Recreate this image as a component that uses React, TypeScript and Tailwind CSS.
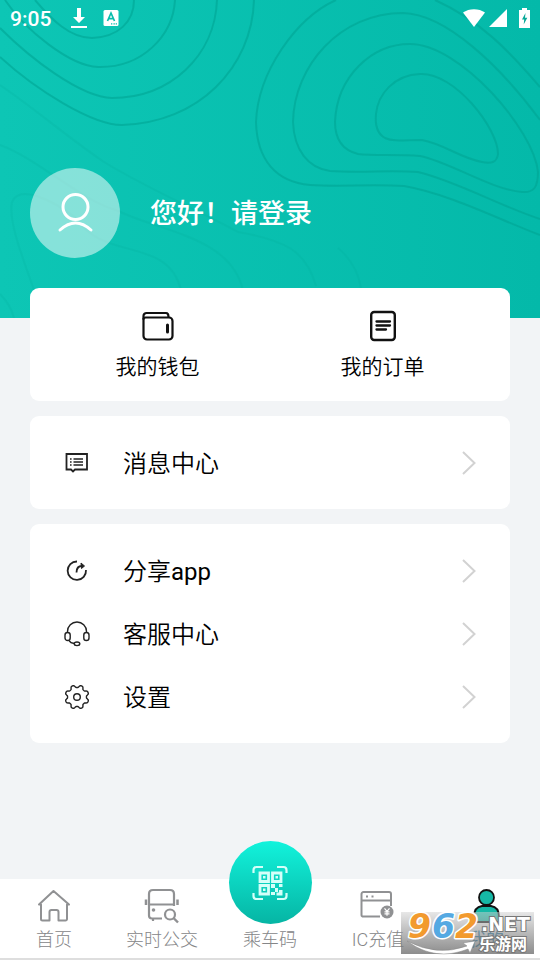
import type { ReactNode } from 'react';

function Contours() {
  return (
    <svg
      className="absolute inset-0 h-full w-full"
      viewBox="0 0 540 318"
      preserveAspectRatio="xMidYMid slice"
      fill="none"
      aria-hidden="true"
    >
      <g stroke="#00a595" strokeOpacity="0.6" strokeWidth="2">
        <path d="M35 0C52 20 70 38 92 38C118 37 134 22 134 0" />
        <path d="M5 0C25 30 70 66 98 67C142 68 173 36 175 0" />
        <path d="M0 28C30 58 80 97 112 98C170 98 215 56 217 0" />
        <path d="M0 57C36 90 92 125 122 125C198 123 252 68 254 0" />
        <path d="M336 0C296 18 258 72 256 122C257 160 276 182 310 185C340 187 370 184 404 186C450 194 500 220 540 235" />
        <path d="M435 0C480 20 510 52 540 87" />
        <path d="M403 13C340 13 294 66 293 122C294 150 308 168 330 171C360 173 390 170 418 172C456 181 500 206 540 219M403 13C446 14 500 66 540 120" />
        <path d="M410 44C460 44 534 130 538 172C538 187 534 193 522 192C492 190 450 162 420 156C396 154 374 156 358 154C342 150 335 138 335 122C337 76 372 44 410 44Z" />
        <path d="M420 74C454 72 498 128 498 154C497 162 492 164 482 162C460 158 444 144 422 140C404 140 394 142 385 138C376 133 375 124 376 114C378 94 394 75 420 74Z" />
      </g>
      <g stroke="#00a595" strokeOpacity="0.16" strokeWidth="2">
        <path d="M0 85C34 108 66 136 104 162C150 190 210 216 238 232C284 240 306 250 316 286" />
        <path d="M0 145C40 160 80 200 116 210C160 232 230 236 243 290" />
        <path d="M34 290C22 256 8 220 12 202C20 184 52 200 76 218C104 262 168 236 181 290" />
        <path d="M338 248C350 258 358 270 361 288" />
        <path d="M0 294C8 302 12 310 14 318" />
      </g>
    </svg>
  );
}

function StatusBar() {
  return (
    <div className="relative flex h-9 items-center px-2.5 text-white">
      <span className="pt-px text-[21px] leading-9 font-medium">9:05</span>
      <svg className="ml-5 h-5 w-4" viewBox="0 0 16 20" fill="currentColor" aria-hidden="true">
        <path d="M6 0h4v9h4l-6 6-6-6h4zM0 18h16v2H0z" />
      </svg>
      <svg className="ml-4 size-4" viewBox="0 0 16 16" aria-hidden="true">
        <rect x="0.5" width="15" height="16" rx="1.5" fill="#fff" />
        <path d="M4.5 11 8 3l3.5 8M5.8 8.7h4.4" stroke="#0abdac" strokeWidth="1.7" fill="none" />
        <path d="M8 13.200h1.300v1.300H8zM10.500 13.200h1.300v1.300h-1.300zM12.700 13.200h1.300v1.300h-1.300z" fill="#0abdac" />
      </svg>
      <svg className="ml-auto h-[18px] w-[22px]" viewBox="0 0 22 18" fill="currentColor" aria-hidden="true">
        <path d="M0 3.500C6-1 16-1 22 3.500L11 18z" />
      </svg>
      <svg className="ml-1 size-[18px]" viewBox="0 0 18 18" fill="currentColor" aria-hidden="true">
        <path d="M18 0v18H0z" />
      </svg>
      <svg className="ml-3 h-5 w-[11px]" viewBox="0 0 11 20" aria-hidden="true">
        <path d="M3 0h5v2h3v18H0V2h3z" fill="#fff" />
        <path d="M6.500 5 3 11.500h2.200L4.700 16.500 8.300 9.800H6z" fill="#08a898" />
      </svg>
    </div>
  );
}

function WalletIcon() {
  return (
    <svg className="size-8" viewBox="0 0 32 32" fill="none" stroke="#111" strokeWidth="2.2" strokeLinecap="round" aria-hidden="true">
      <path d="M1.500 9V6a3 3 0 0 1 3-3H24q2.500 0 2.500 4" />
      <path d="M1.500 9q0-1.500 2-1.500H27a3.500 3.500 0 0 1 3.500 3.500V26a3.500 3.500 0 0 1-3.500 3.500H5A3.500 3.500 0 0 1 1.500 26z" />
      <path d="M25.500 15v7" strokeWidth="3" />
    </svg>
  );
}

function OrderIcon() {
  return (
    <svg className="size-8" viewBox="0 0 32 32" fill="none" stroke="#111" strokeLinecap="round" aria-hidden="true">
      <rect x="4.200" y="2" width="23.600" height="28" rx="3" strokeWidth="2.400" />
      <path d="M9.500 11.500h13.500M9.500 15.500h13.500M9.500 19.500h9.500" strokeWidth="2.300" />
    </svg>
  );
}

const stroke = { fill: 'none', stroke: '#222', strokeWidth: 1.6 } as const;

function MessageIcon() {
  return (
    <svg className="size-[26px]" viewBox="0 0 26 26" {...stroke} strokeWidth={1.8} aria-hidden="true">
      <path d="M2.500 4h20.500v15.500H11L9 21.500l-2-2H2.500z" />
      <path d="M9.500 9h9.500M9.500 12h9.500M9.500 15h9.500M6 9h1.600M6 12h1.600M6 15h1.600" strokeWidth="1.400" />
    </svg>
  );
}

function ShareIcon() {
  return (
    <svg className="size-[26px]" viewBox="0 0 26 26" {...stroke} strokeWidth={1.8} aria-hidden="true">
      <path d="M13 3.500A9.200 9.200 0 1 0 22 12" />
      <path d="M12.500 14.500C12.500 10.500 14 8 18 8" />
      <path d="M17 5 20.500 8 17.500 10.500z" fill="#222" stroke="#222" strokeWidth="1" />
    </svg>
  );
}

function HeadsetIcon() {
  return (
    <svg className="size-[26px]" viewBox="0 0 26 26" {...stroke} strokeWidth={1.4} aria-hidden="true">
      <path d="M3.500 12V10.500a9.500 9.500 0 0 1 19 0V12" />
      <rect x="1" y="11.500" width="5.200" height="8" rx="2.600" />
      <rect x="19.800" y="11.500" width="5.200" height="8" rx="2.600" />
      <path d="M5 19.500c1 2 2.500 2.800 5.400 3" />
      <ellipse cx="13" cy="22.800" rx="2.800" ry="1.800" />
    </svg>
  );
}

// Eight rounded teeth, with a notch at the top of the wheel.
const gearOutline = Array.from({ length: 96 }, (_, i) => {
  const angle = (i / 96) * Math.PI * 2;
  const radius = 10.7 - 1.3 * Math.tanh(2 * Math.cos(8 * angle));
  return `${(13 + radius * Math.sin(angle)).toFixed(2)},${(13 - radius * Math.cos(angle)).toFixed(2)}`;
}).join(' ');

function GearIcon() {
  return (
    <svg className="size-[26px]" viewBox="0 0 26 26" {...stroke} strokeWidth={1.4} strokeLinejoin="round" aria-hidden="true">
      <polygon points={gearOutline} />
      <circle cx="13" cy="13" r="3.300" />
    </svg>
  );
}

function Row({ icon, label }: { icon: ReactNode; label: string }) {
  return (
    <button type="button" className="flex h-[63px] w-full items-center pr-[34px] pl-[34px] text-left">
      {icon}
      <span className="ml-[33px] pt-0.5 text-2xl text-black">{label}</span>
      <svg className="ml-auto h-6 w-[14px]" viewBox="0 0 14 24" fill="none" stroke="#d2d2d2" strokeWidth="2" aria-hidden="true">
        <path d="M1 1 12.500 12 1 23" />
      </svg>
    </button>
  );
}

function HomeIcon() {
  return (
    <svg className="size-9" viewBox="0 0 36 36" fill="none" stroke="#909193" strokeWidth="2" strokeLinejoin="round" aria-hidden="true">
      <path d="M3 16.500 17.500 3 33 16.500H31V31a1.500 1.500 0 0 1-1.500 1.500H22.500V24a2 2 0 0 0-2-2H15.500a2 2 0 0 0-2 2V32.500H6.500A1.500 1.500 0 0 1 5 31V16.500z" />
    </svg>
  );
}

function BusIcon() {
  return (
    <svg className="size-9" viewBox="0 0 36 36" fill="none" stroke="#909193" strokeWidth="2.2" aria-hidden="true">
      <path d="M18 30.500H8a3 3 0 0 1-3-3V6Q5 2 9 2H26Q30 2 30 6V18M5 16.500h25M9 30.500V33" />
      <path d="M2 11.500v5.500M33.500 11.500v5.500" strokeWidth="2.500" />
      <circle cx="9.500" cy="22" r="1.800" fill="#909193" stroke="none" />
      <circle cx="26" cy="26.500" r="5" />
      <path d="m29.500 30 4.500 4.500" strokeWidth="2.400" />
    </svg>
  );
}

function CardIcon() {
  return (
    <svg className="size-9" viewBox="0 0 36 36" fill="none" stroke="#909193" strokeWidth="2" aria-hidden="true">
      <path d="M20 28.500H3.500A1.500 1.500 0 0 1 1.500 27V6a2 2 0 0 1 2-2H29a2 2 0 0 1 2 2V18M1.500 12.500h29.500" />
      <path d="M6 8.500h2M11.500 8.500h2" />
      <circle cx="27" cy="24" r="6.500" fill="#909193" stroke="none" />
      <path d="m24.500 20.300 2.500 3 2.500-3M27 23.300v4.500M24.500 23.800h5M24.500 25.800h5" stroke="#fff" strokeWidth="1.200" />
    </svg>
  );
}

function PersonIcon() {
  return (
    <svg className="size-9" viewBox="0 0 36 36" fill="#16b8a6" stroke="#111" strokeWidth="1.800" aria-hidden="true">
      <path d="M6 34V29Q6 19 14 18h9q8 1 8 11v5z" />
      <circle cx="18.500" cy="9.500" r="7.500" />
    </svg>
  );
}

function QrIcon() {
  return (
    <svg className="size-9" viewBox="0 0 36 36" fill="none" stroke="#d4fff9" strokeWidth="2.200" aria-hidden="true">
      <path d="M1.500 8V5q0-3 3-3H11M25 2h6.500q3 0 3 3v3M34.500 28v3q0 3-3 3H25M11 34H4.500q-3 0-3-3v-3" />
      <path d="M8 8h8.500v8.500H8zM20.500 8h8.500v8.500H20.500zM8 20.500h8.500v8.500H8z" strokeWidth="2.800" />
      <path d="M11 11h2.500v2.500H11zM23.500 11h2.500v2.500H23.500zM11 23.500h2.500v2.500H11zM19 19h4v4h-4zM27 19h3.500v3H27zM23 23h3v4h-3zM27 25h3.500v5.500h-6v-3H27zM19 27h4v3h-4z" fill="#d4fff9" stroke="none" />
    </svg>
  );
}

function Tab({ icon, label, active = false }: { icon: ReactNode; label: string; active?: boolean }) {
  return (
    <button type="button" className="flex min-w-0 flex-1 flex-col items-center">
      {icon}
      <span className={active ? 'text-lg leading-8 text-[#1f7fae]' : 'text-lg leading-8 font-light text-[#858688]'}>
        {label}
      </span>
    </button>
  );
}

function SiteBadge() {
  return (
    <div className="pointer-events-none absolute right-1.5 bottom-1 h-[42px] w-[133px] bg-linear-to-b from-[#d0d0d0]/50 to-[#707070]/80">
      <svg className="h-full w-full overflow-visible" viewBox="0 0 133 42" aria-hidden="true">
        <path d="M6 29Q36 45 66 34L62 31 74 29 69 41 67 37Q34 50 6 29z" fill="#fff" stroke="#888" strokeWidth="0.500" />
        <g
          fontFamily="'DejaVu Sans', sans-serif"
          fontWeight="700"
          fontStyle="italic"
          fontSize="33"
          stroke="#fff"
          strokeWidth="3"
          strokeLinejoin="round"
          style={{ paintOrder: 'stroke' }}
        >
          <text x="7" y="26" fill="#f29a2e">9</text>
          <text x="31" y="26" fill="#55a9e2">6</text>
          <text x="54" y="26" fill="#f29a2e">2</text>
        </g>
        <g fill="#fff" stroke="#777" strokeWidth="2" style={{ paintOrder: 'stroke' }} fontWeight="700">
          <text x="80" y="19" fontFamily="'DejaVu Sans', sans-serif" fontSize="19">.NET</text>
          <text x="78" y="38" fontFamily="'Noto Sans CJK SC', sans-serif" fontSize="16">乐游网</text>
        </g>
      </svg>
    </div>
  );
}

export default function App() {
  return (
    <div className="flex min-h-screen flex-col bg-[#f2f4f6] font-[Roboto,'Noto_Sans_CJK_SC',sans-serif]">
      <header className="relative h-[318px] bg-linear-to-r from-[#0dc6b5] to-[#04b9a9]">
        <Contours />
        <StatusBar />
        <button type="button" className="relative mt-[132px] ml-[30px] flex items-center">
          <span className="flex size-[90px] items-center justify-center rounded-full bg-white/50">
            <svg className="size-10" viewBox="0 0 40 40" fill="none" stroke="#fff" strokeWidth="3" strokeLinecap="round" aria-hidden="true">
              <circle cx="20.500" cy="14" r="12.500" />
              <path d="M5 37Q20.500 23 36 37" />
            </svg>
          </span>
          <span className="ml-[30px] pt-0.5 text-[27px] leading-10 font-medium text-white">您好！请登录</span>
        </button>
      </header>

      <main className="relative -mt-[30px] flex flex-col gap-[15px] px-[30px] pb-12 font-[Roboto,'Noto_Sans_CJK_SC_DemiLight','Noto_Sans_CJK_SC',sans-serif]">
        <section className="flex h-[113px] rounded-[9px] bg-white px-[15px]">
          <button type="button" className="flex flex-1 flex-col items-center pt-[22px] text-[21px] leading-[30px] text-black">
            <WalletIcon />
            <span className="mt-2.5">我的钱包</span>
          </button>
          <button type="button" className="flex flex-1 flex-col items-center pt-[22px] text-[21px] leading-[30px] text-black">
            <OrderIcon />
            <span className="mt-2.5">我的订单</span>
          </button>
        </section>
        <section className="rounded-[9px] bg-white py-[15px]">
          <Row icon={<MessageIcon />} label="消息中心" />
        </section>
        <section className="rounded-[9px] bg-white py-[15px]">
          <Row icon={<ShareIcon />} label="分享app" />
          <Row icon={<HeadsetIcon />} label="客服中心" />
          <Row icon={<GearIcon />} label="设置" />
        </section>
      </main>

      <nav className="relative mt-auto flex h-[81px] items-end border-b-2 border-[#dedede] bg-white pb-0.5">
        <Tab icon={<HomeIcon />} label="首页" />
        <Tab icon={<BusIcon />} label="实时公交" />
        <Tab
          icon={
            <span className="flex size-[83px] items-center justify-center rounded-full bg-linear-to-b from-[#12f3dc] to-[#06b5a4]">
              <QrIcon />
            </span>
          }
          label="乘车码"
        />
        <Tab icon={<CardIcon />} label="IC充值" />
        <Tab icon={<PersonIcon />} label="我的" active />
        <SiteBadge />
      </nav>
    </div>
  );
}
